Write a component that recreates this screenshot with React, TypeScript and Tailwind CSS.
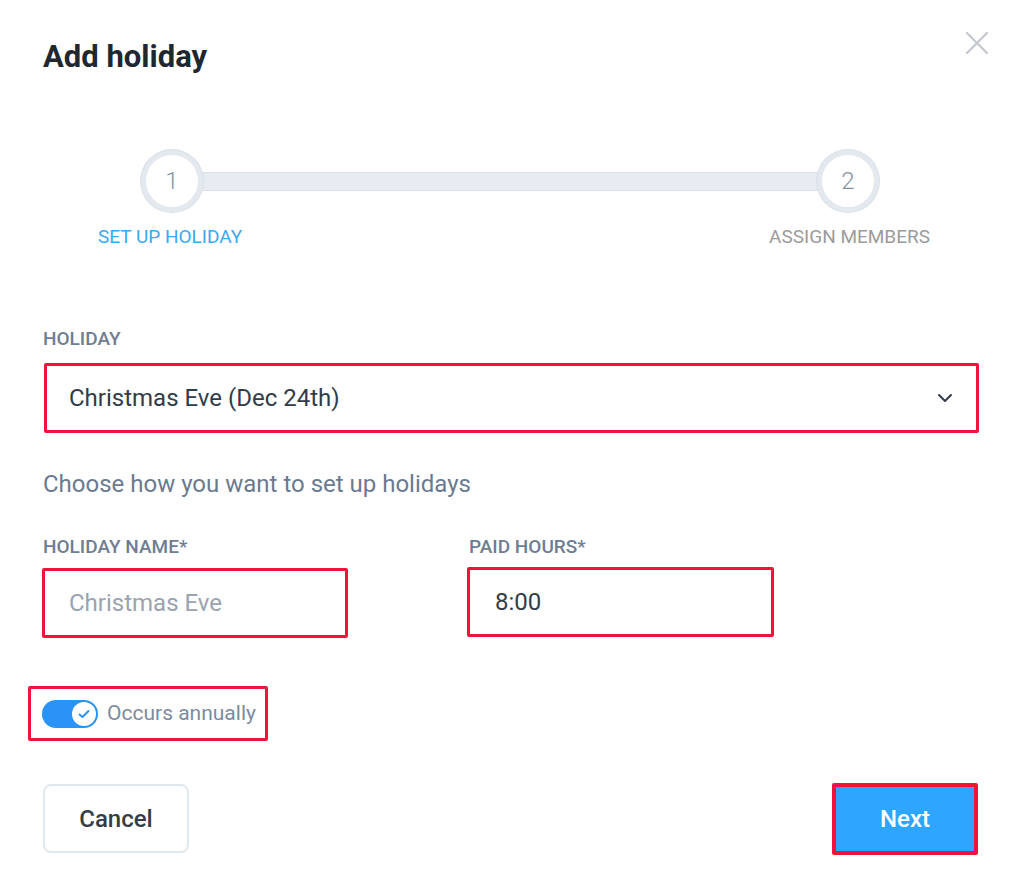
import React from "react";

const Step: React.FC<{ n: number }> = ({ n }) => (
  <div className="relative z-10 flex h-[62px] w-[62px] shrink-0 items-center justify-center rounded-full border-[5px] border-[#e3e9ee] bg-white shadow-[0_0_0_1px_#d9e1e8]">
    <span className="text-[24px] font-light text-[#8592a3]">{n}</span>
  </div>
);

const App: React.FC = () => {
  return (
    <div className="min-h-[896px] w-[1024px] bg-white px-[43px] pt-[39px] font-['Roboto',sans-serif]">
      {/* header */}
      <div className="flex items-start justify-between">
        <h1 className="text-[31px] leading-[36px] font-bold text-[#1f2731]">Add holiday</h1>
        <svg className="mt-[-8px] mr-[-8px]" width="24" height="24" viewBox="0 0 24 24" fill="none" stroke="#c3c8cf" strokeWidth="2.2" strokeLinecap="round">
          <path d="M2 2L22 22M22 2L2 22" />
        </svg>
      </div>

      {/* stepper */}
      <div className="mt-[75px] ml-[98px] mr-[102px] flex items-center">
        <Step n={1} />
        <div className="-mx-[6px] h-[19px] flex-1 border-y border-[#d9e1e8] bg-[#e6ecf1]" />
        <Step n={2} />
      </div>
      <div className="mt-[14px] flex justify-between text-[19px] leading-[22px]">
        <span className="ml-[55px] text-[#3aa9f4]">SET UP HOLIDAY</span>
        <span className="mr-[51px] text-[#9b9b9b]">ASSIGN MEMBERS</span>
      </div>

      {/* holiday select */}
      <div className="mt-[80px] text-[19px] leading-[22px] font-medium text-[#6f7d92]">HOLIDAY</div>
      <div className="mt-[13px] ml-px flex h-[70px] w-[935px] items-center justify-between rounded-[2px] border-[3px] border-[#f2133d] pl-[22px] pr-[22px]">
        <span className="text-[24px] text-[#323c48]">Christmas Eve (Dec 24th)</span>
        <svg width="18" height="18" viewBox="0 0 18 18" fill="none" stroke="#323c48" strokeWidth="2" strokeLinecap="round" strokeLinejoin="round">
          <path d="M3 6L9 12L15 6" />
        </svg>
      </div>

      <p className="mt-[36px] text-[24px] leading-[30px] text-[#6b7a8f]">Choose how you want to set up holidays</p>

      {/* name + hours */}
      <div className="mt-[37px] grid grid-cols-[426px_426px]">
        <div>
          <div className="text-[19px] leading-[22px] font-medium text-[#6f7d92]">HOLIDAY NAME*</div>
          <div className="mt-[10px] -ml-px flex h-[70px] w-[306px] items-center rounded-[2px] border-[3px] border-[#f2133d] pl-[24px]">
            <span className="text-[24px] text-[#9aa3af]">Christmas Eve</span>
          </div>
        </div>
        <div>
          <div className="text-[19px] leading-[22px] font-medium text-[#6f7d92]">PAID HOURS*</div>
          <div className="mt-[9px] -ml-[2px] flex h-[70px] w-[307px] items-center rounded-[2px] border-[3px] border-[#f2133d] pl-[25px]">
            <span className="text-[24px] text-[#323c48]">8:00</span>
          </div>
        </div>
      </div>

      {/* toggle */}
      <div className="mt-[48px] -ml-[15px] flex h-[55px] w-[240px] items-center gap-[9px] rounded-[2px] border-[3px] border-[#f2133d] pl-[11px]">
        <div className="flex h-[28px] w-[56px] items-center justify-end rounded-full bg-[#2a93f5] pr-[2px]">
          <div className="flex h-[24px] w-[24px] items-center justify-center rounded-full bg-white">
            <svg width="16" height="16" viewBox="0 0 16 16" fill="none" stroke="#2a93f5" strokeWidth="2" strokeLinecap="round" strokeLinejoin="round">
              <path d="M3.5 8.5L6.5 11L12.5 5" />
            </svg>
          </div>
        </div>
        <span className="text-[21px] text-[#7d8aa0]">Occurs annually</span>
      </div>

      {/* buttons */}
      <div className="mt-[43px] flex items-start justify-between pr-[3px]">
        <button className="h-[69px] w-[146px] rounded-[8px] border-2 border-[#e3e8ee] bg-white text-[24px] font-medium text-[#333d49]">
          Cancel
        </button>
        <div className="-mt-px flex h-[72px] w-[146px] items-center justify-center rounded-[2px] border-[4px] border-[#f2133d] bg-[#2ea6ff]">
          <span className="text-[24px] font-medium text-white">Next</span>
        </div>
      </div>
    </div>
  );
};

export default App;
